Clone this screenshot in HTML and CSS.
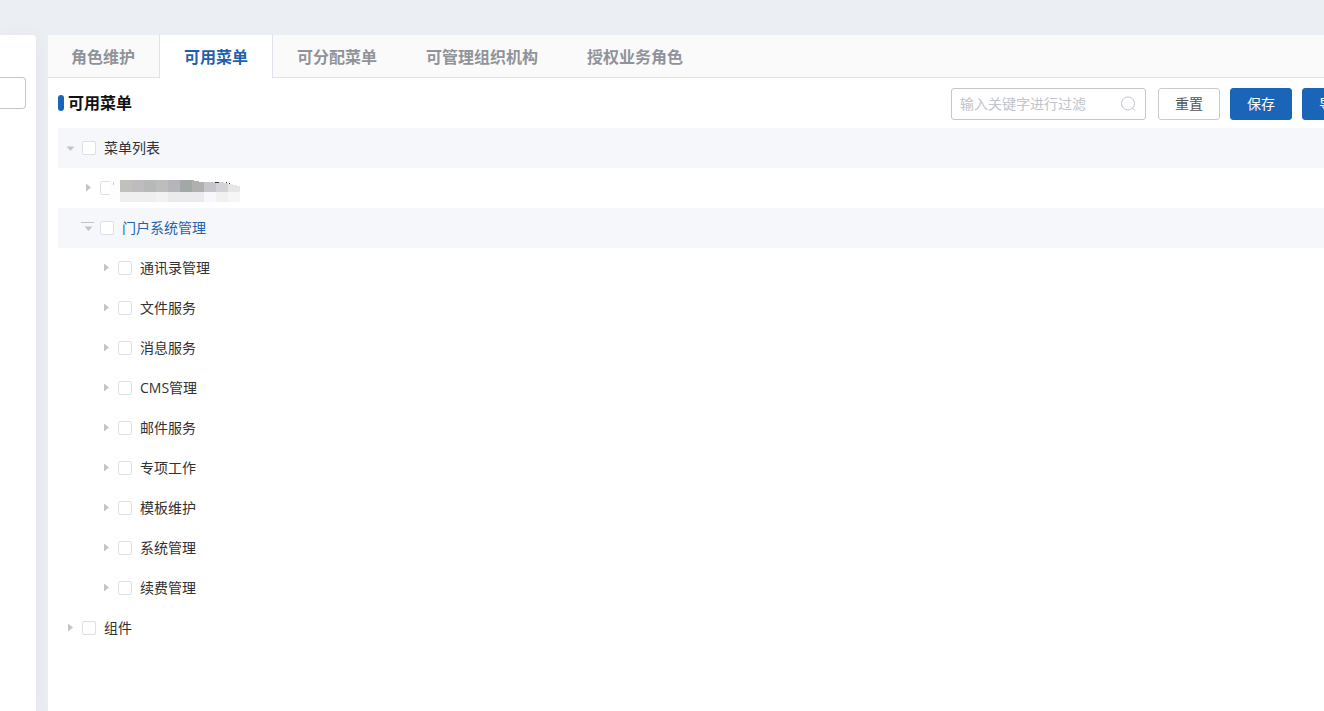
FILE: index.html
```html
<!DOCTYPE html>
<html lang="zh-CN">
<head>
<meta charset="utf-8">
<title>可用菜单</title>
<link rel="stylesheet" href="styles.css">
</head>
<body>
<div class="page">
  <aside class="side">
    <input class="side-input" type="text" aria-label="角色搜索">
  </aside>
  <main class="panel">
    <nav class="tabs" role="tablist">
      <button class="tab" role="tab">角色维护</button>
      <button class="tab active" role="tab" aria-selected="true">可用菜单</button>
      <button class="tab" role="tab">可分配菜单</button>
      <button class="tab" role="tab">可管理组织机构</button>
      <button class="tab" role="tab">授权业务角色</button>
    </nav>
    <section class="content">
      <header class="toolbar">
        <h1 class="title">可用菜单</h1>
        <div class="search">
          <input class="search-input" type="text" placeholder="输入关键字进行过滤" aria-label="输入关键字进行过滤">
          <svg class="search-icon" viewBox="0 0 16 16" aria-hidden="true"><circle cx="8" cy="7.500" r="6.500"/><path d="M12.500 12 15 14.500"/></svg>
        </div>
        <button class="btn">重置</button>
        <button class="btn primary">保存</button>
        <button class="btn primary">导出</button>
      </header>
      <ul class="tree">
        <li class="node shaded">
          <svg class="caret" viewBox="0 0 24 24" aria-hidden="true"><path d="M8.500 10.500h8l-4 4.500z"/></svg>
          <label class="item"><input class="check" type="checkbox">菜单列表</label>
        </li>
        <li class="node level-1">
          <svg class="caret" viewBox="0 0 24 24" aria-hidden="true"><path d="M10 7.500v8l5-4z"/></svg>
          <div class="item masked">
            <input class="check" type="checkbox" aria-label="菜单">
            <svg class="mask" viewBox="0 0 132 24" aria-hidden="true" shape-rendering="crispEdges">
              <path fill="#fdfdfd" d="M2 2h10v21H1V9h1z"/>
              <path fill="#c8cace" d="M5 5h1v3H5z"/>
              <path fill="#c1c0bc" d="M12 3h12v12H12z"/>
              <path fill="#bfbcc0" d="M24 3h12v12H24z"/>
              <path fill="#b6b9b8" d="M36 3h12v12H36z"/>
              <path fill="#bdbdbd" d="M48 3h12v12H48z"/>
              <path fill="#b4b6bb" d="M60 3h12v12H60z"/>
              <path fill="#a2a7a8" d="M72 3h12v12H72z"/>
              <path fill="#b0b0af" d="M84 3h2v1h5v1h5v10H84z"/>
              <path fill="#c5c5cb" d="M96 5h12v10H96z"/>
              <path fill="#d2d3d6" d="M108 5h8v1h4v9h-12z"/>
              <path fill="#e6e6e6" d="M120 7h5v1h4v1h3v6h-12z"/>
              <path fill="#efefef" d="M12 15h36v10H12z"/>
              <path fill="#f2f2f2" d="M48 15h12v10H48z"/>
              <path fill="#ebebee" d="M60 15h36v10H60z"/>
              <path fill="#f6f8fc" d="M96 15h12v10H96z"/>
              <path fill="#f1f1f1" d="M108 15h12v10h-12z"/>
              <path fill="#f6f6f6" d="M120 15h12v10h-12z"/>
              <path fill="#30343b" d="M107 5h4v1h-4zM118 5h1v1h-1zM121 6h1v1h-1z"/>
            </svg>
          </div>
        </li>
        <li class="node level-1 shaded current">
          <svg class="caret" viewBox="0 0 24 24" aria-hidden="true"><path d="M5 6h13v1H5zM8.500 10.500h8l-4 4.500z"/></svg>
          <label class="item"><input class="check" type="checkbox">门户系统管理</label>
        </li>
        <li class="node level-2"><svg class="caret" viewBox="0 0 24 24" aria-hidden="true"><path d="M10 7.500v8l5-4z"/></svg><label class="item"><input class="check" type="checkbox">通讯录管理</label></li>
        <li class="node level-2"><svg class="caret" viewBox="0 0 24 24" aria-hidden="true"><path d="M10 7.500v8l5-4z"/></svg><label class="item"><input class="check" type="checkbox">文件服务</label></li>
        <li class="node level-2"><svg class="caret" viewBox="0 0 24 24" aria-hidden="true"><path d="M10 7.500v8l5-4z"/></svg><label class="item"><input class="check" type="checkbox">消息服务</label></li>
        <li class="node level-2"><svg class="caret" viewBox="0 0 24 24" aria-hidden="true"><path d="M10 7.500v8l5-4z"/></svg><label class="item"><input class="check" type="checkbox">CMS管理</label></li>
        <li class="node level-2"><svg class="caret" viewBox="0 0 24 24" aria-hidden="true"><path d="M10 7.500v8l5-4z"/></svg><label class="item"><input class="check" type="checkbox">邮件服务</label></li>
        <li class="node level-2"><svg class="caret" viewBox="0 0 24 24" aria-hidden="true"><path d="M10 7.500v8l5-4z"/></svg><label class="item"><input class="check" type="checkbox">专项工作</label></li>
        <li class="node level-2"><svg class="caret" viewBox="0 0 24 24" aria-hidden="true"><path d="M10 7.500v8l5-4z"/></svg><label class="item"><input class="check" type="checkbox">模板维护</label></li>
        <li class="node level-2"><svg class="caret" viewBox="0 0 24 24" aria-hidden="true"><path d="M10 7.500v8l5-4z"/></svg><label class="item"><input class="check" type="checkbox">系统管理</label></li>
        <li class="node level-2"><svg class="caret" viewBox="0 0 24 24" aria-hidden="true"><path d="M10 7.500v8l5-4z"/></svg><label class="item"><input class="check" type="checkbox">续费管理</label></li>
        <li class="node"><svg class="caret" viewBox="0 0 24 24" aria-hidden="true"><path d="M10 7.500v8l5-4z"/></svg><label class="item"><input class="check" type="checkbox">组件</label></li>
      </ul>
    </section>
  </main>
</div>
</body>
</html>
```

FILE: styles.css
```css
* {
  box-sizing: border-box;
}

body {
  margin: 0;
  background: #ebeef3;
  color: #303133;
  font: 14px/20px "Open Sans", "Noto Sans CJK SC", sans-serif;
}

button,
input {
  margin: 0;
  font: inherit;
}

.page {
  display: flex;
  gap: 12px;
  min-height: 100vh;
  padding-top: 35px;
  overflow: hidden;
}

.side {
  flex: 0 0 36px;
  padding: 42px 10px 0 0;
  background: #fff;
  border-radius: 0 4px 0 0;
  box-shadow: 0 4px 20px rgba(60, 50, 0, 0.06);
}

.side-input {
  display: block;
  width: 100%;
  height: 32px;
  background: #fff;
  border: 1px solid #c4c6ca;
  border-left: 0;
  border-radius: 0 4px 4px 0;
}

.panel {
  flex: 1;
  min-width: 0;
  background: #fff;
}

.tabs {
  display: flex;
  height: 43px;
  background: #fafafa;
  box-shadow: inset 0 -1px #dfe2ea;
}

.tab {
  padding: 0 24px;
  background: none;
  border: 0;
  border-left: 1px solid transparent;
  color: #909399;
  font-size: 16px;
  font-weight: bold;
  white-space: nowrap;
}

.tab:first-child {
  padding-left: 23px;
  border-left: 0;
}

.tab.active {
  background: #fff;
  border-left-color: #dfe2ea;
  color: #1f5fab;
}

.tab.active + .tab {
  border-left-color: #dfe2ea;
}

.content {
  padding-left: 10px;
}

.toolbar {
  display: flex;
  align-items: center;
  gap: 10px;
  height: 50px;
  margin-right: -40px;
  padding-top: 2px;
}

.title {
  display: flex;
  align-items: center;
  gap: 4px;
  margin: 0 auto 0 0;
  padding-bottom: 3px;
  color: #111;
  font-size: 16px;
  line-height: 24px;
}

.title::before {
  width: 6px;
  height: 16px;
  background: #1b65b9;
  border-radius: 3px;
  content: "";
}

.search {
  display: flex;
  align-items: center;
  width: 195px;
  height: 32px;
  margin-right: 2px;
  padding: 0 9px 0 8px;
  border: 1px solid #c4c6ca;
  border-radius: 3px;
}

.search-input {
  flex: 1;
  min-width: 0;
  padding: 0;
  background: none;
  border: 0;
  outline: 0;
}

.search-input::placeholder {
  color: #c0c4cc;
}

.search-icon {
  width: 16px;
  height: 16px;
  fill: none;
  stroke: #c0c4cc;
}

.btn {
  flex: none;
  width: 62px;
  height: 32px;
  padding: 0;
  background: #fff;
  border: 1px solid #c8cacd;
  border-radius: 3px;
  color: #555;
}

.btn.primary {
  background: #1b65b9;
  border-color: #1b65b9;
  color: #fff;
}

.tree {
  margin: 0;
  padding: 0;
  list-style: none;
}

.node {
  display: flex;
  align-items: center;
  height: 40px;
}

.shaded {
  background: #f5f7fb;
}

.level-1 {
  padding-left: 18px;
}

.level-2 {
  padding-left: 36px;
}

.current {
  color: #2462ab;
}

.caret {
  width: 24px;
  height: 24px;
  fill: #c0c4cc;
}

.item {
  display: flex;
  align-items: center;
  gap: 8px;
}

.check {
  width: 14px;
  height: 14px;
  appearance: none;
  background: #fff;
  border: 1px solid #dcdfe6;
  border-radius: 2px;
}

.masked {
  position: relative;
}

.mask {
  position: absolute;
  top: -4px;
  left: 8px;
  width: 132px;
  height: 24px;
  overflow: visible;
}
```
